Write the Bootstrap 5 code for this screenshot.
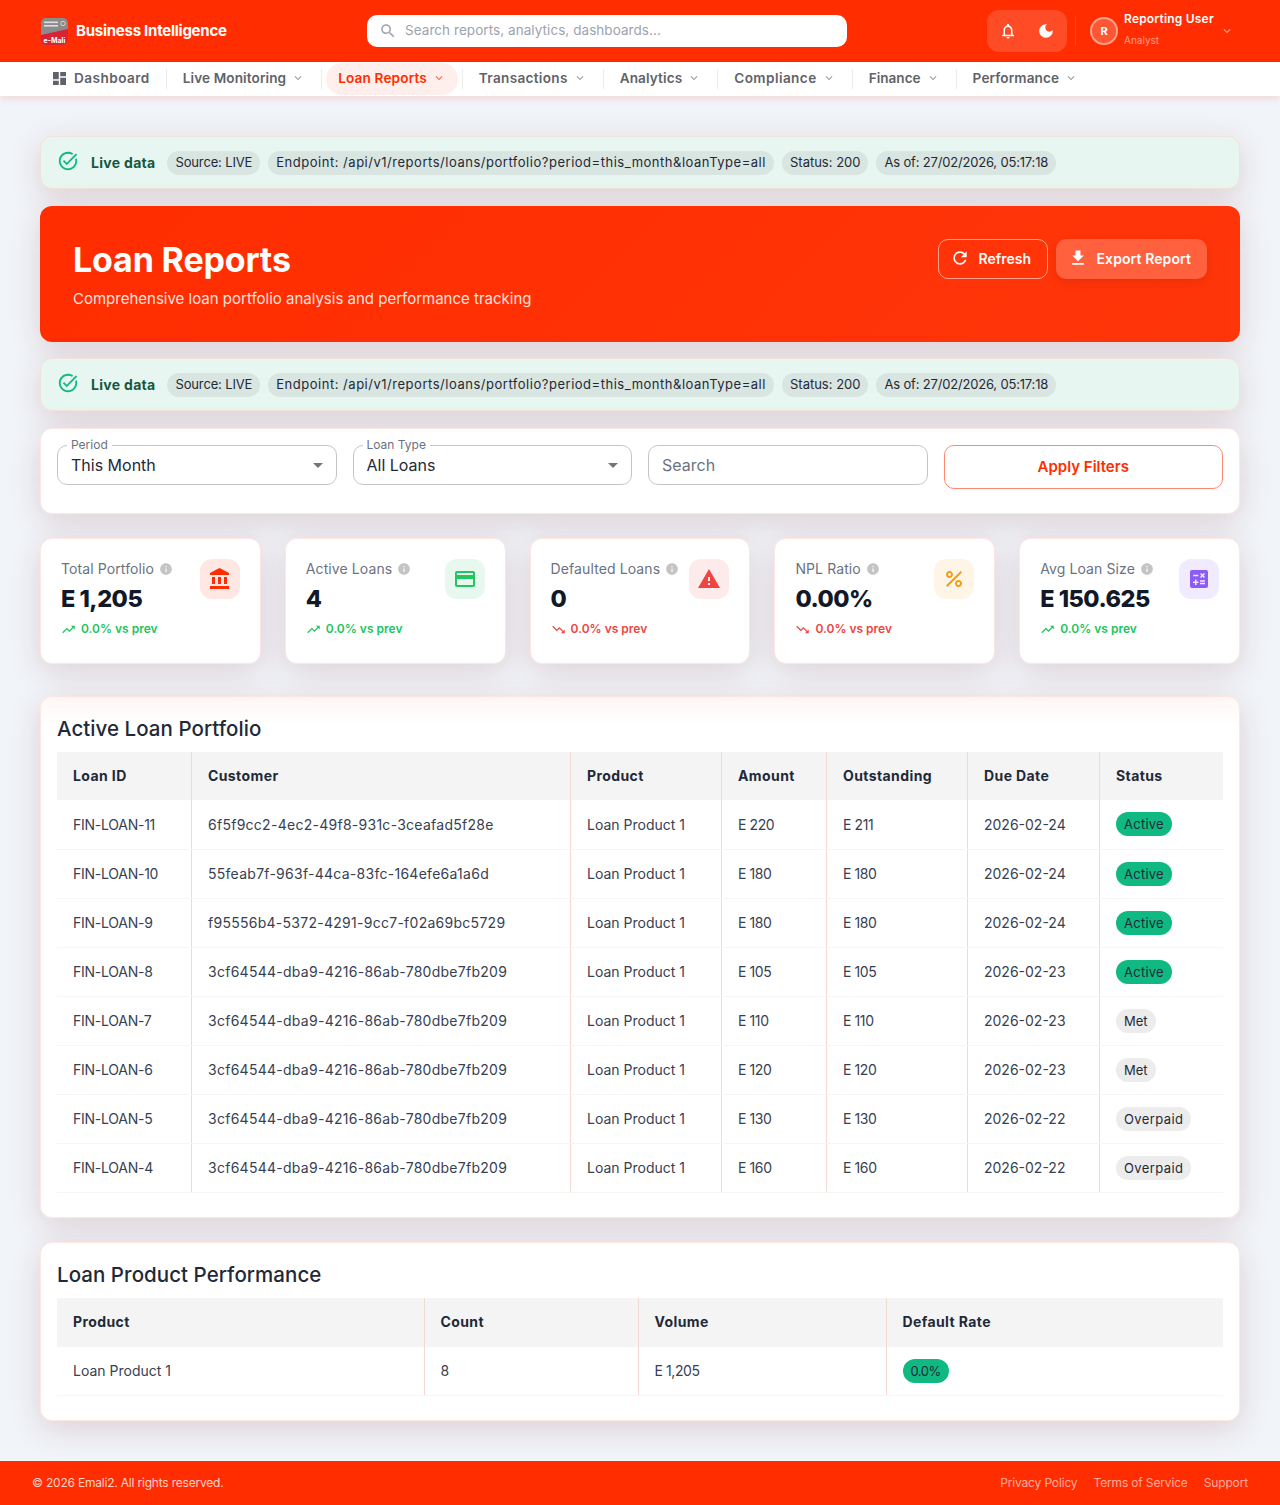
<!DOCTYPE html>
<html lang="en">
<head>
    <meta charset="UTF-8">
    <meta name="viewport" content="width=device-width, initial-scale=1.0">
    <title>Loan Reports</title>
    <link href="https://cdn.jsdelivr.net/npm/bootstrap@5.3.0/dist/css/bootstrap.min.css" rel="stylesheet">
    <style>
        body { font-family: Inter, "Liberation Sans", sans-serif; background: #f1f4f9; color: #1f2937; }
        .ico { width: 1em; height: 1em; fill: currentColor; flex: none; display: block; }

        /* top bar */
        .topbar { height: 62px; background: #ff2d00; color: #fff; padding: 0 40px; }
        .brand-box { width: 327px; padding-left: 1px; }
        .brand-name { font-size: 15px; font-weight: 700; letter-spacing: -.25px; }
        .search-box { width: 480px; height: 32px; background: #fff; border-radius: 10px; padding: 0 12px; color: #9ca3af; font-size: 18px; }
        .search-box input { border: 0; outline: 0; width: 100%; font-size: 13.5px; letter-spacing: .06px; color: #333; background: transparent; padding: 0 0 1px; }
        .search-box input::placeholder { color: #9ca3af; opacity: 1; }
        .action-box { width: 80px; height: 42px; background: rgba(255,255,255,.15); border-radius: 12px; font-size: 18px; padding-left: 12px; gap: 20px; }
        .top-sep { width: 1px; height: 30px; background: rgba(255,255,255,.12); margin: 0 14px 0 8px; }
        .avatar { width: 28px; height: 28px; border-radius: 50%; border: 2px solid rgba(255,255,255,.45); background: rgba(255,255,255,.2); font-size: 11px; font-weight: 700; }
        .user-text { margin-top: -6px; }
        .user-name { font-size: 12px; font-weight: 600; line-height: 16px; letter-spacing: .2px; }
        .user-role { font-size: 10px; line-height: 12px; margin-top: 7px; color: rgba(255,255,255,.55); }
        .user-box { width: 144px; margin-right: 6px; gap: 6px; }
        .user-box .ico { font-size: 14px; opacity: .6; }

        /* menu bar */
        .menubar { height: 34px; background: #fff; padding-left: 37px; box-shadow: 0 2px 8px rgba(255,45,0,.16); position: relative; }
        .menu-item { display: flex; align-items: center; gap: 5px; height: 32px; padding: 0 12px 2px; margin: 0 4px; font-size: 13.6px; font-weight: 600; color: #5f6368; text-decoration: none; border-radius: 16px; letter-spacing: .1px; }
        .menu-item .ico { font-size: 14px; color: #9aa0a6; }
        .menu-item .dash-ico { font-size: 13px; color: #5f6368; margin-right: 3px; }
        .menu-item.on { background: #ffefec; color: #ff2d00; letter-spacing: .14px; }
        .menu-item.on .ico { color: #ff6a4d; }
        .menu-dash { letter-spacing: .45px; }
        .menu-tx { letter-spacing: .3px; }
        .menu-wide { letter-spacing: .42px; }
        .menu-tight { letter-spacing: 0; }
        .menu-sep { width: 1px; height: 20px; background: #ececec; flex: none; }

        /* page */
        .page { padding: 40px; }
        .shade { box-shadow: 0 8px 32px rgba(120,30,30,.16); }
        .live-strip { height: 53px; background: #e8f6f1; border: 1px solid #f3e2da; border-radius: 12px; padding: 0 16px; margin-bottom: 17px; }
        .live-strip .ico { font-size: 22px; color: #10b981; margin-top: -4px; }
        .live-label { font-size: 14px; font-weight: 700; color: #14593f; margin: 0 4px 0 0; letter-spacing: .3px; }
        .live-pill { height: 24px; border-radius: 12px; background: #d9e5e0; padding: 0 8px; font-size: 13px; color: #1f2937; display: flex; align-items: center; white-space: nowrap; }
        .pill-src { letter-spacing: -.15px; }
        .pill-url { letter-spacing: .52px; }
        .pill-time { letter-spacing: -.18px; }

        .hero { height: 136px; background: linear-gradient(135deg, #ff2d00, #ff360a); color: #fff; border-radius: 12px; padding: 33px; margin-bottom: 16px; }
        .hero h1 { font-size: 34px; font-weight: 700; line-height: 42px; margin: 0 0 7px; letter-spacing: -.15px; }
        .hero p { font-size: 15px; line-height: 22px; margin: 0; color: rgba(255,255,255,.88); }
        .hero-btn { height: 40px; border-radius: 10px; font-size: 14px; font-weight: 600; color: #fff; padding: 0 0 2px 12px; display: inline-flex; align-items: center; gap: 8.5px; white-space: nowrap; }
        .hero-btn:hover { color: #fff; }
        .hero-btn .ico { font-size: 20px; }
        .hero-btn.line { border: 1px solid rgba(255,255,255,.55); width: 110px; padding-left: 11px; }
        .hero-btn.fill { background: rgba(255,255,255,.22); border: 0; width: 151px; box-shadow: 0 3px 8px rgba(150,30,0,.2); letter-spacing: .1px; }

        .panel { background: #fff; border: 1px solid #ffe6e0; border-radius: 12px; }
        .filter-panel { height: 86px; padding: 16px; margin-bottom: 24px; }
        .field-wrap { position: relative; }
        .field-wrap label { position: absolute; left: 10px; top: -8px; background: #fff; padding: 0 4px; font-size: 12px; line-height: 15px; color: #6b7280; }
        .filter-panel .form-select, .filter-panel .form-control { height: 40px; border: 1px solid #c4c4c4; border-radius: 10px; font-size: 16px; color: #1f2937; padding: 0 13px; }
        .filter-panel .form-control::placeholder { color: #6b7280; opacity: 1; }
        .filter-panel .form-select { background-image: url("data:image/svg+xml,%3csvg xmlns='http://www.w3.org/2000/svg' viewBox='0 0 10 5'%3e%3cpath fill='%23757575' d='M0 0l5 5 5-5z'/%3e%3c/svg%3e"); background-size: 10px 5px; background-position: right 13px center; }
        .apply-btn { height: 44px; width: 100%; border: 1px solid #ff8a70; border-radius: 10px; background: #fff; color: #ff2d00; font-size: 15px; font-weight: 600; }

        .stat-grid { display: grid; grid-template-columns: repeat(5, 1fr); gap: 24px; margin-bottom: 32px; }
        .stat-tile { height: 126px; padding: 20px; }
        .stat-label { font-size: 14px; line-height: 20px; color: #6b7280; white-space: nowrap; letter-spacing: .1px; }
        .stat-label .ico { font-size: 14px; color: #c4c4c4; margin-left: 5px; }
        .stat-value { font-size: 23.5px; font-weight: 800; line-height: 32px; color: #111827; margin-top: 4px; letter-spacing: -.5px; }
        .stat-trend { font-size: 12px; font-weight: 600; line-height: 18px; margin-top: 5px; }
        .stat-trend .ico { font-size: 15px; margin-right: 5px; }
        .trend-up { color: #22c55e; }
        .trend-down { color: #ef4444; }
        .icon-tile { width: 40px; height: 40px; border-radius: 12px; flex: none; font-size: 24px; }
        .tile-red { background: #ffe8e3; color: #ff2d00; }
        .tile-green { background: #e7f8ee; color: #22c55e; }
        .tile-rose { background: #fdeaea; color: #ef4444; }
        .tile-amber { background: #fff5e6; color: #f59e0b; }
        .tile-violet { background: #f0ebfe; color: #8b5cf6; }

        .data-panel { padding: 16px 16px 24px; margin-bottom: 24px; }
        .data-panel:last-child { margin-bottom: 0; }
        .panel-tint { background: linear-gradient(#fff7f5, #fff 28px); }
        .data-panel h2 { font-size: 20.5px; font-weight: 500; line-height: 30px; margin: 1px 0 8px; color: #1f2937; letter-spacing: .05px; }
        .grid-table { table-layout: fixed; width: 100%; margin: 0; font-size: 14px; }
        .grid-table th { height: 48px; padding: 0 16px 2px; background: #f4f4f5; font-weight: 700; letter-spacing: .4px; color: #1f2937; vertical-align: middle; border-bottom: 0; border-right: 1px solid #f2d9d6; }
        .grid-table.tall-head th { height: 49px; }
        .grid-table td { height: 49px; padding: 0 16px; color: #374151; vertical-align: middle; border-bottom: 1px solid #f7f4f4; border-right: 1px solid #f2d9d6; white-space: nowrap; }
        .grid-table th:last-child, .grid-table td:last-child { border-right: 0; }
        .cell-id { letter-spacing: -.25px; }
        .cell-uuid { letter-spacing: .27px; }
        .cell-money { letter-spacing: -.4px; }
        .state-pill { font-size: 13px; font-weight: 400; padding: 0 8px; height: 24px; line-height: 24px; color: #1f2937; }
        .state-ok { background: #10b981; letter-spacing: .25px; }
        .state-idle { background: #ececec; }
        .state-wide { letter-spacing: .4px; }
        .state-rate { letter-spacing: -.5px; }
        .w-134 { width: 134.5px; } .w-379 { width: 379px; } .w-151 { width: 151px; } .w-105 { width: 105px; } .w-141 { width: 141px; } .w-132 { width: 132px; }
        .w-367 { width: 367px; } .w-214 { width: 214px; } .w-248 { width: 248px; }

        .foot { height: 44px; background: #ff2d00; padding: 0 32px; font-size: 12px; color: rgba(255,255,255,.8); }
        .foot span { letter-spacing: -.2px; }
        .foot a { color: rgba(255,255,255,.62); text-decoration: none; letter-spacing: -.15px; }
    </style>
</head>
<body>
    <!-- icon set -->
    <svg width="0" height="0" class="position-absolute">
        <symbol id="i-dash" viewBox="3 3 18 18"><path d="M3 13h8V3H3v10zm0 8h8v-6H3v6zm10 0h8V11h-8v10zm0-18v6h8V3h-8z"/></symbol>
        <symbol id="i-search" viewBox="0 0 24 24"><path d="M15.5 14h-.79l-.28-.27C15.41 12.59 16 11.11 16 9.5 16 5.91 13.09 3 9.5 3S3 5.91 3 9.5 5.91 16 9.5 16c1.61 0 3.09-.59 4.23-1.57l.27.28v.79l5 4.99L20.49 19l-4.99-5zm-6 0C7.01 14 5 11.99 5 9.5S7.01 5 9.5 5 14 7.01 14 9.5 11.99 14 9.5 14z"/></symbol>
        <symbol id="i-more" viewBox="0 0 24 24"><path d="M16.59 8.59 12 13.17 7.41 8.59 6 10l6 6 6-6z"/></symbol>
        <symbol id="i-bell" viewBox="0 0 24 24"><path d="M12 22c1.1 0 2-.9 2-2h-4c0 1.1.9 2 2 2zm6-6v-5c0-3.07-1.63-5.64-4.5-6.32V4c0-.83-.67-1.5-1.5-1.5s-1.5.67-1.5 1.5v.68C7.64 5.36 6 7.92 6 11v5l-2 2v1h16v-1l-2-2zm-2 1H8v-6c0-2.48 1.51-4.5 4-4.5s4 2.02 4 4.5v6z"/></symbol>
        <symbol id="i-moon" viewBox="0 0 24 24"><path d="M12 3c-4.97 0-9 4.03-9 9s4.03 9 9 9 9-4.03 9-9c0-.46-.04-.92-.1-1.36-.98 1.37-2.58 2.26-4.4 2.26-2.98 0-5.4-2.42-5.4-5.4 0-1.81.89-3.42 2.26-4.4-.44-.06-.9-.1-1.36-.1z"/></symbol>
        <symbol id="i-task" viewBox="0 0 24 24"><path d="M22 5.18 10.59 16.6l-4.24-4.24 1.41-1.41 2.83 2.83 10-10L22 5.18zm-2.21 5.04c.13.57.21 1.17.21 1.78 0 4.42-3.58 8-8 8s-8-3.58-8-8 3.58-8 8-8c1.58 0 3.04.46 4.28 1.25l1.44-1.44C16.1 2.67 14.13 2 12 2 6.48 2 2 6.48 2 12s4.48 10 10 10 10-4.48 10-10c0-1.19-.22-2.33-.6-3.39l-1.61 1.61z"/></symbol>
        <symbol id="i-refresh" viewBox="0 0 24 24"><path d="M17.65 6.35C16.2 4.9 14.21 4 12 4c-4.42 0-7.99 3.58-7.99 8s3.57 8 7.99 8c3.73 0 6.84-2.55 7.73-6h-2.08c-.82 2.33-3.04 4-5.65 4-3.31 0-6-2.69-6-6s2.69-6 6-6c1.66 0 3.14.69 4.22 1.78L13 11h7V4l-2.35 2.35z"/></symbol>
        <symbol id="i-down" viewBox="0 0 24 24"><path d="M19 9h-4V3H9v6H5l7 7 7-7zM5 18v2h14v-2H5z"/></symbol>
        <symbol id="i-info" viewBox="0 0 24 24"><path d="M12 2C6.48 2 2 6.48 2 12s4.48 10 10 10 10-4.48 10-10S17.52 2 12 2zm1 15h-2v-6h2v6zm0-8h-2V7h2v2z"/></symbol>
        <symbol id="i-bank" viewBox="0 0 24 24"><path d="M4 10v7h3v-7H4zm6 0v7h3v-7h-3zM2 22h19v-3H2v3zm14-12v7h3v-7h-3zm-4.5-9L2 6v2h19V6l-9.5-5z"/></symbol>
        <symbol id="i-card" viewBox="0 0 24 24"><path d="M20 4H4c-1.11 0-1.99.89-1.99 2L2 18c0 1.11.89 2 2 2h16c1.11 0 2-.89 2-2V6c0-1.11-.89-2-2-2zm0 14H4v-6h16v6zm0-10H4V6h16v2z"/></symbol>
        <symbol id="i-warn" viewBox="0 0 24 24"><path d="M1 21h22L12 2 1 21zm12-3h-2v-2h2v2zm0-4h-2v-4h2v4z"/></symbol>
        <symbol id="i-pct" viewBox="0 0 24 24"><path d="M7.5 11C9.43 11 11 9.43 11 7.5S9.43 4 7.5 4 4 5.57 4 7.5 5.57 11 7.5 11zm0-5C8.33 6 9 6.67 9 7.5S8.33 9 7.5 9 6 8.33 6 7.5 6.67 6 7.5 6zM4.0025 18.5832 18.59 3.9955l1.4142 1.4142L5.4167 19.9974zM16.5 13c-1.93 0-3.5 1.57-3.5 3.5s1.57 3.5 3.5 3.5 3.5-1.57 3.5-3.5-1.57-3.5-3.5-3.5zm0 5c-.83 0-1.5-.67-1.5-1.5s.67-1.5 1.5-1.5 1.5.67 1.5 1.5-.67 1.5-1.5 1.5z"/></symbol>
        <symbol id="i-calc" viewBox="0 0 24 24"><path d="M19 3H5c-1.1 0-2 .9-2 2v14c0 1.1.9 2 2 2h14c1.1 0 2-.9 2-2V5c0-1.1-.9-2-2-2zm-5.97 4.06L14.09 6l1.41 1.41L16.91 6l1.06 1.06-1.41 1.41 1.41 1.41-1.06 1.06-1.41-1.4-1.41 1.41-1.06-1.06 1.41-1.41-1.41-1.42zm-6.78.66h5v1.5h-5v-1.5zM11.5 16h-2v2H8v-2H6v-1.5h2v-2h1.5v2h2V16zm6.5 1.25h-5v-1.5h5v1.5zm0-2.5h-5v-1.5h5v1.5z"/></symbol>
        <symbol id="i-up" viewBox="0 0 24 24"><path d="M16 6l2.29 2.29-4.88 4.88-4-4L2 16.59 3.41 18l6-6 4 4 6.3-6.29L22 12V6z"/></symbol>
        <symbol id="i-fall" viewBox="0 0 24 24"><path d="M16 18l2.29-2.29-4.88-4.88-4 4L2 7.41 3.41 6l6 6 4-4 6.3 6.29L22 12v6z"/></symbol>
    </svg>

    <header class="topbar d-flex align-items-center">
        <div class="brand-box d-flex align-items-center gap-2">
            <svg width="27" height="27" viewBox="0 0 27 27">
                <rect width="27" height="27" rx="5" fill="#8c8a8a"/>
                <path d="M0 17 27 11V22a5 5 0 0 1-5 5H5a5 5 0 0 1-5-5z" fill="#d92235"/>
                <circle cx="22" cy="5.5" r="2.2" fill="none" stroke="#f4c8c0" stroke-width="1"/>
                <rect x="3" y="3.5" width="14" height="1.6" fill="#dedede"/>
                <rect x="3" y="7" width="14" height="1.6" fill="#dedede"/>
                <text x="13.5" y="24.5" text-anchor="middle" font-size="7" font-weight="700" fill="#fff" font-family="Inter, sans-serif">e-Mali</text>
            </svg>
            <span class="brand-name">Business Intelligence</span>
        </div>
        <div class="search-box d-flex align-items-center gap-2">
            <svg class="ico"><use href="#i-search"/></svg>
            <input type="text" placeholder="Search reports, analytics, dashboards...">
        </div>
        <div class="d-flex align-items-center ms-auto">
            <div class="action-box d-flex align-items-center">
                <svg class="ico"><use href="#i-bell"/></svg>
                <svg class="ico"><use href="#i-moon"/></svg>
            </div>
            <div class="top-sep"></div>
            <div class="user-box d-flex align-items-center">
                <div class="avatar d-flex align-items-center justify-content-center flex-shrink-0">R</div>
                <div class="user-text flex-grow-1">
                    <div class="user-name">Reporting User</div>
                    <div class="user-role">Analyst</div>
                </div>
                <svg class="ico"><use href="#i-more"/></svg>
            </div>
        </div>
    </header>

    <nav class="menubar d-flex align-items-center">
        <a href="#" class="menu-item menu-dash"><svg class="ico dash-ico"><use href="#i-dash"/></svg>Dashboard</a>
        <span class="menu-sep"></span>
        <a href="#" class="menu-item">Live Monitoring <svg class="ico"><use href="#i-more"/></svg></a>
        <span class="menu-sep"></span>
        <a href="#" class="menu-item on">Loan Reports <svg class="ico"><use href="#i-more"/></svg></a>
        <span class="menu-sep"></span>
        <a href="#" class="menu-item menu-tx">Transactions <svg class="ico"><use href="#i-more"/></svg></a>
        <span class="menu-sep"></span>
        <a href="#" class="menu-item">Analytics <svg class="ico"><use href="#i-more"/></svg></a>
        <span class="menu-sep"></span>
        <a href="#" class="menu-item menu-wide">Compliance <svg class="ico"><use href="#i-more"/></svg></a>
        <span class="menu-sep"></span>
        <a href="#" class="menu-item menu-tight">Finance <svg class="ico"><use href="#i-more"/></svg></a>
        <span class="menu-sep"></span>
        <a href="#" class="menu-item">Performance <svg class="ico"><use href="#i-more"/></svg></a>
    </nav>

    <main class="page">
        <div class="live-strip shade d-flex align-items-center gap-2">
            <svg class="ico"><use href="#i-task"/></svg>
            <span class="live-label ms-1">Live data</span>
            <span class="live-pill pill-src">Source: LIVE</span>
            <span class="live-pill pill-url">Endpoint: /api/v1/reports/loans/portfolio?period=this_month&amp;loanType=all</span>
            <span class="live-pill">Status: 200</span>
            <span class="live-pill pill-time">As of: 27/02/2026, 05:17:18</span>
        </div>

        <section class="hero shade d-flex justify-content-between">
            <div>
                <h1>Loan Reports</h1>
                <p>Comprehensive loan portfolio analysis and performance tracking</p>
            </div>
            <div class="d-flex gap-2">
                <button class="btn hero-btn line"><svg class="ico"><use href="#i-refresh"/></svg>Refresh</button>
                <button class="btn hero-btn fill"><svg class="ico"><use href="#i-down"/></svg>Export Report</button>
            </div>
        </section>

        <div class="live-strip shade d-flex align-items-center gap-2">
            <svg class="ico"><use href="#i-task"/></svg>
            <span class="live-label ms-1">Live data</span>
            <span class="live-pill pill-src">Source: LIVE</span>
            <span class="live-pill pill-url">Endpoint: /api/v1/reports/loans/portfolio?period=this_month&amp;loanType=all</span>
            <span class="live-pill">Status: 200</span>
            <span class="live-pill pill-time">As of: 27/02/2026, 05:17:18</span>
        </div>

        <div class="panel shade filter-panel">
            <div class="row g-3">
                <div class="col-3">
                    <div class="field-wrap">
                        <label for="period">Period</label>
                        <select id="period" class="form-select"><option>This Month</option></select>
                    </div>
                </div>
                <div class="col-3">
                    <div class="field-wrap">
                        <label for="loanType">Loan Type</label>
                        <select id="loanType" class="form-select"><option>All Loans</option></select>
                    </div>
                </div>
                <div class="col-3">
                    <input type="text" class="form-control" placeholder="Search">
                </div>
                <div class="col-3">
                    <button class="btn apply-btn">Apply Filters</button>
                </div>
            </div>
        </div>

        <div class="stat-grid">
            <div class="panel shade stat-tile d-flex justify-content-between">
                <div>
                    <div class="stat-label d-flex align-items-center">Total Portfolio<svg class="ico"><use href="#i-info"/></svg></div>
                    <div class="stat-value">E 1,205</div>
                    <div class="stat-trend trend-up d-flex align-items-center"><svg class="ico"><use href="#i-up"/></svg>0.0% vs prev</div>
                </div>
                <div class="icon-tile tile-red d-flex align-items-center justify-content-center"><svg class="ico"><use href="#i-bank"/></svg></div>
            </div>
            <div class="panel shade stat-tile d-flex justify-content-between">
                <div>
                    <div class="stat-label d-flex align-items-center">Active Loans<svg class="ico"><use href="#i-info"/></svg></div>
                    <div class="stat-value">4</div>
                    <div class="stat-trend trend-up d-flex align-items-center"><svg class="ico"><use href="#i-up"/></svg>0.0% vs prev</div>
                </div>
                <div class="icon-tile tile-green d-flex align-items-center justify-content-center"><svg class="ico"><use href="#i-card"/></svg></div>
            </div>
            <div class="panel shade stat-tile d-flex justify-content-between">
                <div>
                    <div class="stat-label d-flex align-items-center">Defaulted Loans<svg class="ico"><use href="#i-info"/></svg></div>
                    <div class="stat-value">0</div>
                    <div class="stat-trend trend-down d-flex align-items-center"><svg class="ico"><use href="#i-fall"/></svg>0.0% vs prev</div>
                </div>
                <div class="icon-tile tile-rose d-flex align-items-center justify-content-center"><svg class="ico"><use href="#i-warn"/></svg></div>
            </div>
            <div class="panel shade stat-tile d-flex justify-content-between">
                <div>
                    <div class="stat-label d-flex align-items-center">NPL Ratio<svg class="ico"><use href="#i-info"/></svg></div>
                    <div class="stat-value">0.00%</div>
                    <div class="stat-trend trend-down d-flex align-items-center"><svg class="ico"><use href="#i-fall"/></svg>0.0% vs prev</div>
                </div>
                <div class="icon-tile tile-amber d-flex align-items-center justify-content-center"><svg class="ico"><use href="#i-pct"/></svg></div>
            </div>
            <div class="panel shade stat-tile d-flex justify-content-between">
                <div>
                    <div class="stat-label d-flex align-items-center">Avg Loan Size<svg class="ico"><use href="#i-info"/></svg></div>
                    <div class="stat-value">E 150.625</div>
                    <div class="stat-trend trend-up d-flex align-items-center"><svg class="ico"><use href="#i-up"/></svg>0.0% vs prev</div>
                </div>
                <div class="icon-tile tile-violet d-flex align-items-center justify-content-center"><svg class="ico"><use href="#i-calc"/></svg></div>
            </div>
        </div>

        <section class="panel panel-tint shade data-panel">
            <h2>Active Loan Portfolio</h2>
            <table class="table grid-table">
                <colgroup><col class="w-134"><col class="w-379"><col class="w-151"><col class="w-105"><col class="w-141"><col class="w-132"><col></colgroup>
                <thead>
                    <tr><th>Loan ID</th><th>Customer</th><th>Product</th><th>Amount</th><th>Outstanding</th><th>Due Date</th><th>Status</th></tr>
                </thead>
                <tbody>
                    <tr><td class="cell-id">FIN-LOAN-11</td><td class="cell-uuid">6f5f9cc2-4ec2-49f8-931c-3ceafad5f28e</td><td>Loan Product 1</td><td class="cell-money">E 220</td><td class="cell-money">E 211</td><td>2026-02-24</td><td><span class="badge rounded-pill state-pill state-ok">Active</span></td></tr>
                    <tr><td class="cell-id">FIN-LOAN-10</td><td class="cell-uuid">55feab7f-963f-44ca-83fc-164efe6a1a6d</td><td>Loan Product 1</td><td class="cell-money">E 180</td><td class="cell-money">E 180</td><td>2026-02-24</td><td><span class="badge rounded-pill state-pill state-ok">Active</span></td></tr>
                    <tr><td class="cell-id">FIN-LOAN-9</td><td class="cell-uuid">f95556b4-5372-4291-9cc7-f02a69bc5729</td><td>Loan Product 1</td><td class="cell-money">E 180</td><td class="cell-money">E 180</td><td>2026-02-24</td><td><span class="badge rounded-pill state-pill state-ok">Active</span></td></tr>
                    <tr><td class="cell-id">FIN-LOAN-8</td><td class="cell-uuid">3cf64544-dba9-4216-86ab-780dbe7fb209</td><td>Loan Product 1</td><td class="cell-money">E 105</td><td class="cell-money">E 105</td><td>2026-02-23</td><td><span class="badge rounded-pill state-pill state-ok">Active</span></td></tr>
                    <tr><td class="cell-id">FIN-LOAN-7</td><td class="cell-uuid">3cf64544-dba9-4216-86ab-780dbe7fb209</td><td>Loan Product 1</td><td class="cell-money">E 110</td><td class="cell-money">E 110</td><td>2026-02-23</td><td><span class="badge rounded-pill state-pill state-idle">Met</span></td></tr>
                    <tr><td class="cell-id">FIN-LOAN-6</td><td class="cell-uuid">3cf64544-dba9-4216-86ab-780dbe7fb209</td><td>Loan Product 1</td><td class="cell-money">E 120</td><td class="cell-money">E 120</td><td>2026-02-23</td><td><span class="badge rounded-pill state-pill state-idle">Met</span></td></tr>
                    <tr><td class="cell-id">FIN-LOAN-5</td><td class="cell-uuid">3cf64544-dba9-4216-86ab-780dbe7fb209</td><td>Loan Product 1</td><td class="cell-money">E 130</td><td class="cell-money">E 130</td><td>2026-02-22</td><td><span class="badge rounded-pill state-pill state-idle state-wide">Overpaid</span></td></tr>
                    <tr><td class="cell-id">FIN-LOAN-4</td><td class="cell-uuid">3cf64544-dba9-4216-86ab-780dbe7fb209</td><td>Loan Product 1</td><td class="cell-money">E 160</td><td class="cell-money">E 160</td><td>2026-02-22</td><td><span class="badge rounded-pill state-pill state-idle state-wide">Overpaid</span></td></tr>
                </tbody>
            </table>
        </section>

        <section class="panel shade data-panel">
            <h2>Loan Product Performance</h2>
            <table class="table grid-table tall-head">
                <colgroup><col class="w-367"><col class="w-214"><col class="w-248"><col></colgroup>
                <thead>
                    <tr><th>Product</th><th>Count</th><th>Volume</th><th>Default Rate</th></tr>
                </thead>
                <tbody>
                    <tr><td>Loan Product 1</td><td>8</td><td class="cell-money">E 1,205</td><td><span class="badge rounded-pill state-pill state-ok state-rate">0.0%</span></td></tr>
                </tbody>
            </table>
        </section>
    </main>

    <footer class="foot d-flex align-items-center justify-content-between">
        <span>© 2026 Emali2. All rights reserved.</span>
        <div class="d-flex gap-3">
            <a href="#">Privacy Policy</a>
            <a href="#">Terms of Service</a>
            <a href="#">Support</a>
        </div>
    </footer>

    <script src="https://cdn.jsdelivr.net/npm/bootstrap@5.3.0/dist/js/bootstrap.bundle.min.js"></script>
</body>
</html>
